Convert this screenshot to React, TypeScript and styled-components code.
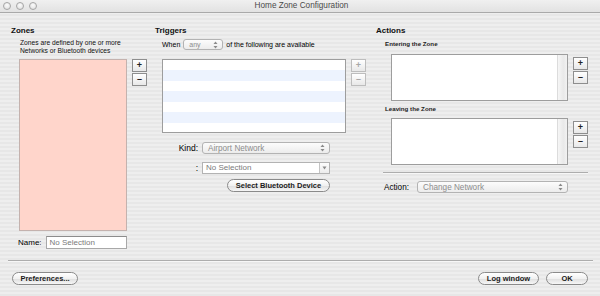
import React from "react";
import styled, { createGlobalStyle } from "styled-components";

const GlobalStyle = createGlobalStyle`
  html, body {
    margin: 0;
    padding: 0;
    background: #ececec;
  }
  body {
    font-family: "Liberation Sans", Arial, sans-serif;
    color: #111;
  }
`;

// ==========================================
// Window chrome
// ==========================================
const Window = styled.div`
  width: 600px;
  height: 296px;
  overflow: hidden;
  display: flex;
  flex-direction: column;
  background: repeating-linear-gradient(
    to bottom,
    #eeeeee 0px,
    #eeeeee 2px,
    #e7e7e7 2px,
    #e7e7e7 4px
  );
`;

const TitleBar = styled.div`
  height: 12px;
  border-bottom: 1px solid #a9a9a9;
  display: flex;
  align-items: center;
  background: linear-gradient(to bottom, #f0f0f0, #e2e2e2);
`;

const Lights = styled.div`
  display: flex;
  gap: 5px;
  padding-left: 3px;
`;

const Light = styled.span`
  width: 6px;
  height: 6px;
  border-radius: 50%;
  border: 1px solid #a5a5a5;
  background: radial-gradient(circle at 50% 35%, #fbfbfb, #dcdcdc);
`;

const Title = styled.div`
  flex: 1;
  text-align: center;
  font-size: 8.2px;
  color: #4a4a4a;
  margin-right: 34px;
  line-height: 12px;
`;

const Main = styled.div`
  height: 247px;
  display: flex;
  padding-left: 11px;
`;

const Column = styled.div<{ $width: number }>`
  width: ${(p) => p.$width}px;
  display: flex;
  flex-direction: column;
`;

const Heading = styled.div`
  font-size: 8px;
  font-weight: bold;
  line-height: 10px;
  margin-top: 13px;
  color: #111;
`;

const SubHeading = styled.div<{ $top: number }>`
  font-size: 6.2px;
  font-weight: bold;
  line-height: 8px;
  margin-top: ${(p) => p.$top}px;
  padding-left: 9px;
  color: #222;
`;

const Desc = styled.div`
  font-size: 6.7px;
  line-height: 8px;
  margin-top: 3px;
  padding-left: 9px;
  color: #111;
`;

const Row = styled.div<{ $top: number; $left?: number; $gap?: number }>`
  display: flex;
  align-items: flex-start;
  margin-top: ${(p) => p.$top}px;
  padding-left: ${(p) => p.$left ?? 0}px;
  gap: ${(p) => p.$gap ?? 5}px;
`;

const CenterRow = styled(Row)`
  align-items: center;
`;

// ==========================================
// Lists
// ==========================================
const PinkList = styled.div`
  width: 106px;
  height: 170px;
  background: #ffd5cb;
  border: 1px solid #c4b2ae;
`;

const StripedList = styled.div`
  width: 182px;
  height: 72px;
  border: 1px solid #9d9d9d;
  background: repeating-linear-gradient(
    to bottom,
    #ffffff 0px,
    #ffffff 10.5px,
    #edf3fe 10.5px,
    #edf3fe 21px
  );
`;

const ActionList = styled.div`
  width: 175px;
  height: 45px;
  border: 1px solid #9d9d9d;
  background: #fff;
  display: flex;
`;

const ListBody = styled.div`
  flex: 1;
`;

const Scroller = styled.div`
  width: 9px;
  border-left: 1px solid #dcdcdc;
  background: linear-gradient(to right, #f6f6f6, #e9e9e9 60%, #f2f2f2);
`;

// ==========================================
// Buttons and controls
// ==========================================
const SquareStack = styled.div<{ $top?: number }>`
  display: flex;
  flex-direction: column;
  gap: 1px;
  margin-top: ${(p) => p.$top ?? 0}px;
`;

const SquareBtn = styled.div<{ $disabled?: boolean }>`
  width: 13px;
  height: 11px;
  border: 1px solid ${(p) => (p.$disabled ? "#bdbdbd" : "#8e8e8e")};
  background: linear-gradient(to bottom, #ffffff, #e8e8e8);
  color: ${(p) => (p.$disabled ? "#a8a8a8" : "#222")};
  font-size: 9px;
  font-weight: bold;
  line-height: 11px;
  text-align: center;
`;

const Label = styled.div<{ $width?: number; $size?: number }>`
  width: ${(p) => (p.$width ? `${p.$width}px` : "auto")};
  text-align: ${(p) => (p.$width ? "right" : "left")};
  font-size: ${(p) => p.$size ?? 8.5}px;
  color: #000;
  white-space: nowrap;
`;

const TextField = styled.div<{ $width: number }>`
  width: ${(p) => p.$width}px;
  height: 13px;
  box-sizing: border-box;
  border: 1px solid #a8a8a8;
  border-top-color: #8c8c8c;
  background: #fff;
  font-size: 8px;
  line-height: 11px;
  padding-left: 3px;
  color: #7a7a7a;
`;

const Popup = styled.div<{ $width: number; $height?: number; $size?: number }>`
  width: ${(p) => p.$width}px;
  height: ${(p) => p.$height ?? 12}px;
  box-sizing: border-box;
  border: 1px solid #b3b3b3;
  border-radius: 3px;
  background: linear-gradient(to bottom, #fcfcfc, #ececec);
  display: flex;
  align-items: center;
  justify-content: space-between;
  padding: 0 4px 0 5px;
  font-size: ${(p) => p.$size ?? 8.2}px;
  color: #8d8d8d;
`;

const Combo = styled.div`
  width: 128px;
  height: 12px;
  box-sizing: border-box;
  border: 1px solid #b3b3b3;
  background: #fff;
  display: flex;
  font-size: 8px;
  color: #7a7a7a;
`;

const ComboText = styled.div`
  flex: 1;
  padding-left: 3px;
  line-height: 10px;
`;

const ComboArrow = styled.div`
  width: 9px;
  border-left: 1px solid #c4c4c4;
  background: linear-gradient(to bottom, #fdfdfd, #ececec);
  display: flex;
  align-items: center;
  justify-content: center;
`;

const PushButton = styled.div<{ $width: number }>`
  width: ${(p) => p.$width}px;
  height: 13px;
  box-sizing: border-box;
  border: 1px solid #8a8a8a;
  border-radius: 7px;
  background: linear-gradient(to bottom, #ffffff 0%, #f1f1f1 50%, #dedede 51%, #f6f6f6 100%);
  font-size: 7.5px;
  font-weight: bold;
  color: #1b1b1b;
  display: flex;
  align-items: center;
  justify-content: center;
`;

const Separator = styled.div<{ $left: number; $width: number; $top?: number }>`
  margin-left: ${(p) => p.$left}px;
  margin-top: ${(p) => p.$top ?? 0}px;
  width: ${(p) => p.$width}px;
  height: 1px;
  background: #adadad;
  border-bottom: 1px solid #f7f7f7;
`;

const Footer = styled.div`
  display: flex;
  align-items: center;
  padding: 10px 12px 0 12px;
`;

const Spacer = styled.div`
  flex: 1;
`;

const FooterRight = styled.div`
  display: flex;
  gap: 7px;
`;

const UpDown = () => (
  <svg width="5" height="8" viewBox="0 0 5 8">
    <path d="M2.5 0.5 L4.5 3 L0.5 3 Z" fill="#8a8a8a" />
    <path d="M2.5 7.5 L4.5 5 L0.5 5 Z" fill="#8a8a8a" />
  </svg>
);

const Down = () => (
  <svg width="5" height="4" viewBox="0 0 5 4">
    <path d="M0.5 0.5 L4.5 0.5 L2.5 3.5 Z" fill="#8a8a8a" />
  </svg>
);

// ==========================================
// Main
// ==========================================
const App = () => {
  return (
    <Window>
      <GlobalStyle />
      <TitleBar>
        <Lights>
          <Light />
          <Light />
          <Light />
        </Lights>
        <Title>Home Zone Configuration</Title>
      </TitleBar>

      <Main>
        <Column $width={144}>
          <Heading>Zones</Heading>
          <Desc>
            Zones are defined by one or more
            <br />
            Networks or Bluetooth devices
          </Desc>
          <Row $top={4} $left={8} $gap={5}>
            <PinkList />
            <SquareStack>
              <SquareBtn>+</SquareBtn>
              <SquareBtn>–</SquareBtn>
            </SquareStack>
          </Row>
          <CenterRow $top={5} $left={7} $gap={4}>
            <Label $size={8}>Name:</Label>
            <TextField $width={81}>No Selection</TextField>
          </CenterRow>
        </Column>

        <Column $width={221}>
          <Heading>Triggers</Heading>
          <CenterRow $top={3} $left={7} $gap={3}>
            <Label $size={7}>When</Label>
            <Popup $width={40} $height={11} $size={7}>
              <span>any</span>
              <UpDown />
            </Popup>
            <Label $size={7}>of the following are available</Label>
          </CenterRow>
          <Row $top={9} $left={7} $gap={5}>
            <StripedList />
            <SquareStack>
              <SquareBtn $disabled>+</SquareBtn>
              <SquareBtn $disabled>–</SquareBtn>
            </SquareStack>
          </Row>
          <CenterRow $top={9} $left={7} $gap={4}>
            <Label $width={36}>Kind:</Label>
            <Popup $width={128}>
              <span>Airport Network</span>
              <UpDown />
            </Popup>
          </CenterRow>
          <CenterRow $top={8} $left={7} $gap={4}>
            <Label $width={36}>:</Label>
            <Combo>
              <ComboText>No Selection</ComboText>
              <ComboArrow>
                <Down />
              </ComboArrow>
            </Combo>
          </CenterRow>
          <Row $top={5} $left={72}>
            <PushButton $width={103}>Select Bluetooth Device</PushButton>
          </Row>
        </Column>

        <Column $width={213}>
          <Heading>Actions</Heading>
          <SubHeading $top={4}>Entering the Zone</SubHeading>
          <Row $top={6} $left={15} $gap={5}>
            <ActionList>
              <ListBody />
              <Scroller />
            </ActionList>
            <SquareStack $top={3}>
              <SquareBtn>+</SquareBtn>
              <SquareBtn>–</SquareBtn>
            </SquareStack>
          </Row>
          <SubHeading $top={4}>Leaving the Zone</SubHeading>
          <Row $top={5} $left={15} $gap={5}>
            <ActionList>
              <ListBody />
              <Scroller />
            </ActionList>
            <SquareStack $top={3}>
              <SquareBtn>+</SquareBtn>
              <SquareBtn>–</SquareBtn>
            </SquareStack>
          </Row>
          <Separator $left={7} $width={205} $top={7} />
          <CenterRow $top={7} $left={7} $gap={8}>
            <Label $width={26} $size={8.2}>Action:</Label>
            <Popup $width={151}>
              <span>Change Network</span>
              <UpDown />
            </Popup>
          </CenterRow>
        </Column>
      </Main>

      <Separator $left={8} $width={585} />
      <Footer>
        <PushButton $width={66}>Preferences...</PushButton>
        <Spacer />
        <FooterRight>
          <PushButton $width={61}>Log window</PushButton>
          <PushButton $width={42}>OK</PushButton>
        </FooterRight>
      </Footer>
    </Window>
  );
};

export default App;
